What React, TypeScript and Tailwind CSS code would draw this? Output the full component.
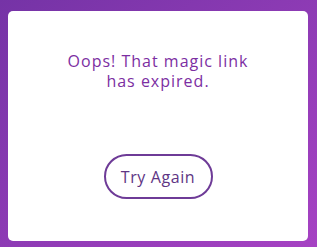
export default function App() {
  return (
    <div className="w-[317px] h-[247px] bg-gradient-to-br from-[#7533a6] to-[#a642c3] pt-[11px] pl-2 pr-[9px] pb-[6px] font-['Open_Sans',sans-serif]">
      {/* card */}
      <div className="h-[230px] w-[300px] bg-white rounded-[5px] flex flex-col items-center">
        <p className="mt-[40px] text-center text-[16px] leading-[20px] tracking-[1px] text-[#7c2ea2]">
          Oops! That magic link
          <br />
          has expired.
        </p>
        <button className="mt-[63px] w-[109px] h-[45px] rounded-full border-2 border-[#6e3b97] text-[16px] font-medium text-[#5e3584] tracking-[0.6px]">
          Try Again
        </button>
      </div>
    </div>
  );
}
